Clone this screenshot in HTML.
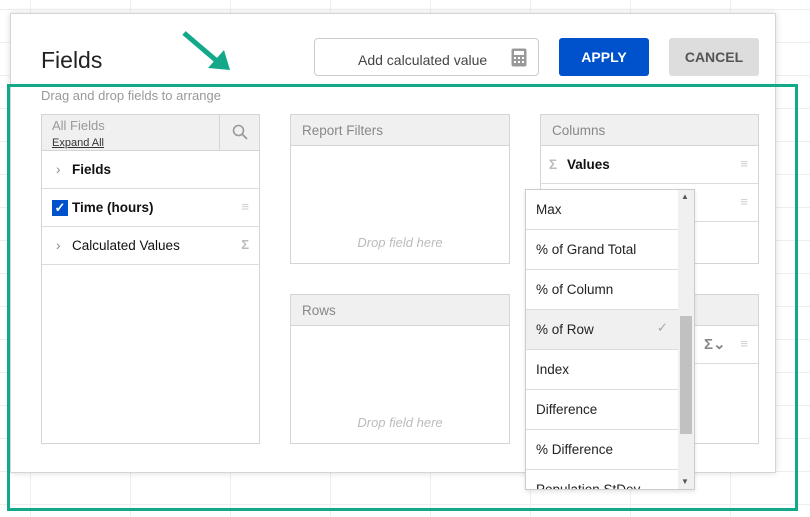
<!DOCTYPE html>
<html><head><style>
*{box-sizing:border-box;margin:0;padding:0}
body{width:810px;height:517px;position:relative;overflow:hidden;background:#fff;font-family:"Liberation Sans",sans-serif;color:#111}
.abs{position:absolute}
.grid{position:absolute;inset:0;background-image:linear-gradient(#eee 1px,transparent 1px),linear-gradient(90deg,#eee 1px,transparent 1px);background-size:100px 33px;background-position:30px 9px}
.dlg{left:10px;top:13px;width:766px;height:460px;background:#fff;border:1px solid #d5d5d5;box-shadow:0 0 6px rgba(0,0,0,.15)}
.box{position:absolute;border:1px solid #d5d5d5;background:#fff}
.hd{height:31px;background:#f0f0f0;border-bottom:1px solid #d5d5d5;color:#888;font-size:13.5px;padding:8px 11px}
.row{height:38px;border-bottom:1px solid #dcdcdc;font-size:13.5px;padding:11px 10px;position:relative}
.drop{position:absolute;left:0;right:0;text-align:center;color:#bbb;font-style:italic;font-size:13px}
.ham{position:absolute;right:10px;top:10px;color:#ccc;font-size:13px}
.dd .it{height:40px;border-bottom:1px solid #dcdcdc;font-size:13.5px;padding:12px 10px;color:#222}
</style></head><body>
<div class="grid"></div>
<div class="abs dlg"></div>
<div class="abs" style="left:41px;top:47px;font-size:23px;color:#222">Fields</div>
<svg class="abs" style="left:178px;top:28px" width="60" height="45"><line x1="6" y1="5" x2="40" y2="34" stroke="#14a88a" stroke-width="5"/><polygon points="30,40 52,42 46,22" fill="#14a88a"/></svg>
<div class="abs" style="left:314px;top:38px;width:225px;height:38px;border:1px solid #ccc;border-radius:4px;font-size:14px;color:#444;padding:13px 0 0 43px">Add calculated value</div>
<svg class="abs" style="left:511px;top:48px" width="16" height="19"><rect x="0.5" y="0.5" width="15" height="18" rx="2" fill="#999"/><rect x="3" y="3" width="10" height="4" fill="#fff"/><g fill="#fff"><rect x="3" y="9" width="2" height="2"/><rect x="7" y="9" width="2" height="2"/><rect x="11" y="9" width="2" height="2"/><rect x="3" y="13" width="2" height="2"/><rect x="7" y="13" width="2" height="2"/><rect x="11" y="13" width="2" height="2"/></g></svg>
<div class="abs" style="left:559px;top:38px;width:90px;height:38px;background:#0052cc;border-radius:3px;color:#fff;font-weight:bold;font-size:14px;text-align:center;line-height:38px">APPLY</div>
<div class="abs" style="left:669px;top:38px;width:90px;height:38px;background:#ddd;border-radius:3px;color:#555;font-weight:bold;font-size:14px;text-align:center;line-height:38px">CANCEL</div>
<div class="abs" style="left:41px;top:88px;font-size:13px;color:#999">Drag and drop fields to arrange</div>

<div class="box" style="left:41px;top:114px;width:219px;height:330px">
 <div style="height:36px;background:#f0f0f0;border-bottom:1px solid #d5d5d5;position:relative">
  <div class="abs" style="left:10px;top:3px;font-size:13px;color:#999">All Fields</div>
  <div class="abs" style="left:10px;top:22px;font-size:11px;color:#333;text-decoration:underline">Expand All</div>
  <div class="abs" style="left:177px;top:0;width:1px;height:36px;background:#d5d5d5"></div>
  <svg class="abs" style="left:190px;top:9px" width="16" height="16"><circle cx="6.5" cy="6.5" r="5" stroke="#999" stroke-width="1.6" fill="none"/><line x1="10" y1="10" x2="15" y2="15" stroke="#999" stroke-width="1.8"/></svg>
 </div>
 <div class="row" style="font-weight:bold;padding-left:30px"><span class="abs" style="left:14px;color:#888;font-weight:normal">›</span>Fields</div>
 <div class="row" style="font-weight:bold;padding-left:30px"><span class="abs" style="left:10px;top:11px;width:16px;height:16px;background:#0052cc;color:#fff;font-size:13px;line-height:16px;text-align:center">✓</span>Time (hours)<span class="ham">≡</span></div>
 <div class="row" style="padding-left:30px"><span class="abs" style="left:14px;color:#888">›</span>Calculated Values<span class="ham" style="color:#bbb;font-weight:bold">Σ</span></div>
</div>

<div class="box" style="left:290px;top:114px;width:220px;height:150px"><div class="hd">Report Filters</div><div class="drop" style="top:120px">Drop field here</div></div>
<div class="box" style="left:290px;top:294px;width:220px;height:150px"><div class="hd">Rows</div><div class="drop" style="top:120px">Drop field here</div></div>
<div class="box" style="left:540px;top:114px;width:219px;height:150px"><div class="hd">Columns</div>
 <div class="row" style="font-weight:bold;padding-left:26px"><span class="abs" style="left:8px;color:#bbb">Σ</span>Values<span class="ham">≡</span></div>
 <div class="row"><span class="ham">≡</span></div></div>
<div class="box" style="left:540px;top:294px;width:219px;height:150px"><div class="hd"></div>
 <div class="row"><span class="abs" style="left:163px;top:9px;color:#888;font-weight:bold;font-size:15px">Σ⌄</span><span class="ham">≡</span></div></div>

<div class="abs dd" style="left:525px;top:189px;width:170px;height:301px;border:1px solid #ccc;background:#fff;overflow:hidden;box-shadow:0 2px 4px rgba(0,0,0,.1)">
 <div style="width:152px">
 <div class="it">Max</div><div class="it">% of Grand Total</div><div class="it">% of Column</div>
 <div class="it" style="background:#f0f0f0;position:relative">% of Row<span class="abs" style="right:10px;top:10px;color:#aaa">✓</span></div>
 <div class="it">Index</div><div class="it">Difference</div><div class="it">% Difference</div><div class="it">Population StDev</div>
 </div>
 <div class="abs" style="left:152px;top:0;width:17px;height:300px;background:#f0f0f0"></div>
 <div class="abs" style="left:154px;top:126px;width:12px;height:118px;background:#c1c1c1"></div>
 <div class="abs" style="left:155px;top:2px;font-size:8px;color:#555">▲</div>
 <div class="abs" style="left:155px;top:287px;font-size:8px;color:#555">▼</div>
</div>

<div class="abs" style="left:7px;top:84px;width:791px;height:427px;border:3px solid #14a88a"></div>
</body></html>
